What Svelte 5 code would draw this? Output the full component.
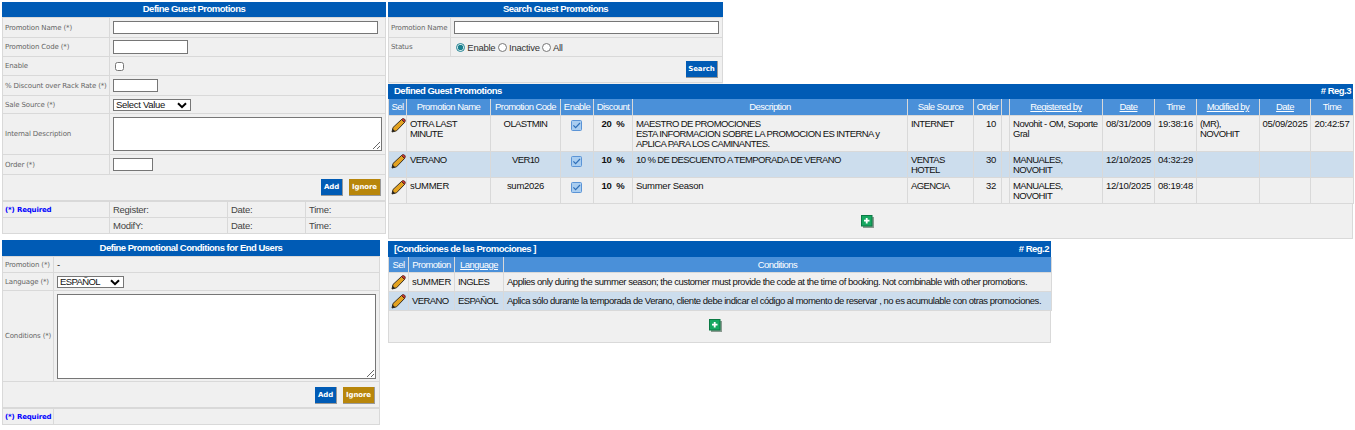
<script>
	const mainCols = [18, 84, 70, 33, 39, 275, 66, 28, 8, 93, 52, 42, 63, 51, 43];
	const mainHead = [
		{ t: "Sel" }, { t: "Promotion Name" }, { t: "Promotion Code" }, { t: "Enable" }, { t: "Discount" },
		{ t: "Description" }, { t: "Sale Source" }, { t: "Order" }, { t: "" },
		{ t: "Registered by", link: true }, { t: "Date", link: true }, { t: "Time" },
		{ t: "Modified by", link: true }, { t: "Date", link: true }, { t: "Time" },
	];
	const promos = [
		{
			name: "OTRA LAST MINUTE", code: "OLASTMIN", pct: "20", h: 36,
			desc: ["MAESTRO DE PROMOCIONES", "ESTA INFORMACION SOBRE LA PROMOCION ES INTERNA y APLICA PARA LOS CAMINANTES."],
			source: "INTERNET", order: 10, reg: "Novohit - OM, Soporte Gral", date: "08/31/2009", time: "19:38:16",
			mod: "(MR), NOVOHIT", modDate: "05/09/2025", modTime: "20:42:57",
		},
		{
			name: "VERANO", code: "VER10", pct: "10", h: 26, alt: true,
			desc: ["10 % DE DESCUENTO A TEMPORADA DE VERANO"],
			source: "VENTAS HOTEL", order: 30, reg: "MANUALES, NOVOHIT", date: "12/10/2025", time: "04:32:29",
			mod: "", modDate: "", modTime: "",
		},
		{
			name: "sUMMER", code: "sum2026", pct: "10", h: 26,
			desc: ["Summer Season"],
			source: "AGENCIA", order: 32, reg: "MANUALES, NOVOHIT", date: "12/10/2025", time: "08:19:48",
			mod: "", modDate: "", modTime: "",
		},
	];
	const condCols = [20, 46, 49, 548];
	const conds = [
		{ promo: "sUMMER", lang: "INGLES", text: "Applies only during the summer season; the customer must provide the code at the time of booking. Not combinable with other promotions." },
		{ promo: "VERANO", lang: "ESPAÑOL", alt: true, text: "Aplica sólo durante la temporada de Verano, cliente debe indicar el código al momento de reservar , no es acumulable con otras promociones." },
	];

	// upper case text runs wider in this font, it gets tighter spacing
	const isCaps = (s) => /^[^a-z]*[A-Z][^a-z]*$/.test(s) || s.startsWith("ESTA ");
</script>

{#snippet pencil()}
	<svg class="icon" width="15" height="15" viewBox="0 0 15 15">
		<path d="M1 14 L2 9.5 L10.5 1.5 L13.5 4.5 L5.5 12.8 Z" fill="#e3a21f" stroke="#3a3020" stroke-width="1"/>
		<path d="M10.5 1.5 L11.6 .6 Q12.5 .2 13.5 1 L14.2 2 Q14.6 3 13.9 3.9 L13.5 4.5 Z" fill="#c8372d" stroke="#3a2020" stroke-width=".7"/>
		<path d="M1 14 L1.7 10.8 L4.2 13.2 Z" fill="#222"/>
	</svg>
{/snippet}

{#snippet checked()}
	<svg class="icon check" width="11" height="11" viewBox="0 0 11 11">
		<rect x=".5" y=".5" width="10" height="10" rx="1" fill="#a9cdf0" stroke="#5b94d6"/>
		<path d="M2.4 5.4 L4.6 7.6 L9 3" fill="none" stroke="#2f6fb8" stroke-width="1.2"/>
	</svg>
{/snippet}

{#snippet plus()}
	<svg class="icon" width="13" height="13" viewBox="0 0 13 13">
		<rect x="2" y="2" width="11" height="11" fill="#8a9a90"/>
		<rect x=".5" y=".5" width="10.5" height="10.5" fill="#17a861" stroke="#0b7a45"/>
		<path d="M5.7 3 V8.5 M3 5.7 H8.5" stroke="#fff" stroke-width="1.8"/>
	</svg>
{/snippet}

{#snippet dropdown(label, cls)}
	<span class="select-wrap {cls}">
		<select><option>{label}</option></select>
		<svg class="chevron" width="10" height="7" viewBox="0 0 10 7">
			<path d="M1 1.2 L5 5.2 L9 1.2" fill="none" stroke="#000" stroke-width="2"/>
		</svg>
	</span>
{/snippet}

<div class="page">
	<div class="left">
		<section class="panel guest">
			<h2>Define Guest Promotions</h2>
			<table class="form">
				<colgroup><col class="lab-wide" /><col /></colgroup>
				<tbody>
					<tr class="r20"><th>Promotion Name (*)</th><td><input class="w265" type="text" /></td></tr>
					<tr class="r19"><th>Promotion Code (*)</th><td><input class="w75" type="text" /></td></tr>
					<tr class="r19"><th>Enable</th><td><input class="chk" type="checkbox" /></td></tr>
					<tr class="r20"><th>% Discount over Rack Rate (*)</th><td><input class="w45" type="text" /></td></tr>
					<tr class="r18"><th>Sale Source (*)</th><td>{@render dropdown("Select Value", "sel78")}</td></tr>
					<tr class="r41"><th>Internal Description</th><td><textarea class="ta-guest"></textarea></td></tr>
					<tr class="r20"><th>Order (*)</th><td><input class="w40" type="text" /></td></tr>
				</tbody>
			</table>
			<div class="actions">
				<button class="btn add">Add</button>
				<button class="btn ignore">Ignore</button>
			</div>
			<table class="audit">
				<colgroup><col class="lab-wide" /><col class="c118" /><col class="c78" /><col /></colgroup>
				<tbody>
					<tr><th class="req">(*) Required</th><td>Register:</td><td>Date:</td><td>Time:</td></tr>
					<tr><th></th><td>ModifY:</td><td>Date:</td><td>Time:</td></tr>
				</tbody>
			</table>
		</section>

		<section class="panel cond-form">
			<h2>Define Promotional Conditions for End Users</h2>
			<table class="form">
				<colgroup><col class="lab-narrow" /><col /></colgroup>
				<tbody>
					<tr class="r16"><th>Promotion (*)</th><td>-</td></tr>
					<tr class="r18"><th>Language (*)</th><td>{@render dropdown("ESPAÑOL", "sel66")}</td></tr>
					<tr class="r91"><th>Conditions (*)</th><td><textarea class="ta-cond"></textarea></td></tr>
				</tbody>
			</table>
			<div class="actions low">
				<button class="btn add">Add</button>
				<button class="btn ignore">Ignore</button>
			</div>
			<table class="audit">
				<colgroup><col class="lab-narrow" /><col /></colgroup>
				<tbody><tr><th class="req">(*) Required</th><td></td></tr></tbody>
			</table>
		</section>
	</div>

	<div class="right">
		<section class="panel search">
			<h2>Search Guest Promotions</h2>
			<table class="form">
				<colgroup><col class="lab-search" /><col /></colgroup>
				<tbody>
					<tr class="r20"><th>Promotion Name</th><td><input class="w265" type="text" /></td></tr>
					<tr class="r19"><th>Status</th><td class="radios">
						<label><input type="radio" name="status" checked /> Enable</label>
						<label><input type="radio" name="status" /> Inactive</label>
						<label><input type="radio" name="status" /> All</label>
					</td></tr>
				</tbody>
			</table>
			<div class="actions">
				<button class="btn add wide">Search</button>
			</div>
		</section>

		<section class="panel defined">
			<h2 class="split"><span>Defined Guest Promotions</span><span># Reg.3</span></h2>
			<table class="grid">
				<colgroup>
					{#each mainCols as w}<col style:width="{w}px" />{/each}
				</colgroup>
				<thead>
					<tr>
						{#each mainHead as col}
							<th class:link={col.link}>{col.t}</th>
						{/each}
					</tr>
				</thead>
				<tbody>
					{#each promos as p}
						<tr class:alt={p.alt} style:height="{p.h}px">
							<td class="ico">{@render pencil()}</td>
							<td class:caps={isCaps(p.name)}>{p.name}</td>
							<td class="ctr" class:caps={isCaps(p.code)}>{p.code}</td>
							<td class="ctr">{@render checked()}</td>
							<td class="ctr pct">{p.pct}&nbsp; %</td>
							<td>{#each p.desc as line}<div class:caps={isCaps(line)}>{line}</div>{/each}</td>
							<td class="caps">{p.source}</td>
							<td class="num">{p.order}</td>
							<td></td>
							<td class="tight" class:caps={isCaps(p.reg)}>{p.reg}</td>
							<td class="ctr nowrap">{p.date}</td>
							<td class="ctr nowrap">{p.time}</td>
							<td class="caps">{p.mod}</td>
							<td class="ctr nowrap">{p.modDate}</td>
							<td class="ctr nowrap">{p.modTime}</td>
						</tr>
					{/each}
				</tbody>
			</table>
			<div class="foot f35">{@render plus()}</div>
		</section>

		<section class="panel conditions">
			<h2 class="split"><span>[Condiciones de las Promociones ]</span><span># Reg.2</span></h2>
			<table class="grid">
				<colgroup>
					{#each condCols as w}<col style:width="{w}px" />{/each}
				</colgroup>
				<thead>
					<tr><th>Sel</th><th>Promotion</th><th class="link">Language</th><th>Conditions</th></tr>
				</thead>
				<tbody>
					{#each conds as c}
						<tr class:alt={c.alt} class="cond-row">
							<td class="ico">{@render pencil()}</td>
							<td class="mid" class:caps={isCaps(c.promo)}>{c.promo}</td>
							<td class="mid caps">{c.lang}</td>
							<td class="mid tight">{c.text}</td>
						</tr>
					{/each}
				</tbody>
			</table>
			<div class="foot f32">{@render plus()}</div>
		</section>
	</div>
</div>

<style>
	:global(body) {
		margin: 0;
		background: #fff;
		font-family: "Liberation Sans", Arial, sans-serif;
		font-size: 9.5px;
		letter-spacing: -0.27px;
		color: #111;
	}
	.page {
		display: flex;
		gap: 2px;
		padding: 2px 2px 0 2px;
	}
	.left {
		width: 384px;
		flex: none;
		display: flex;
		flex-direction: column;
		gap: 6px;
	}
	.right {
		flex: 1;
		min-width: 0;
		display: flex;
		flex-direction: column;
	}
	.panel {
		background: #f0f0f0;
		box-sizing: border-box;
	}
	.cond-form { width: 378px; }
	.search { width: 335px; height: 82px; }
	.conditions { width: 663px; margin-top: 2px; }
	h2 {
		margin: 0;
		height: 15px;
		line-height: 14px;
		background: #005bb5;
		color: #fff;
		font-size: 9.5px;
		font-weight: bold;
		text-align: center;
		letter-spacing: -0.5px;
	}
	.cond-form h2, .conditions h2 { height: 16px; line-height: 16px; }
	h2.split {
		display: flex;
		justify-content: space-between;
		padding: 0 2px 0 6px;
		text-align: left;
	}
	table {
		border-collapse: collapse;
		table-layout: fixed;
		width: 100%;
	}
	.lab-wide { width: 107px; }
	.lab-narrow { width: 51px; }
	.lab-search { width: 62px; }
	.c118 { width: 118px; }
	.c78 { width: 78px; }

	.form th, .form td, .audit th, .audit td {
		border: 1px solid #d9d9d9;
		padding: 0;
		box-sizing: border-box;
	}
	.form th, .audit th {
		font-family: "DejaVu Sans", Verdana, sans-serif;
		font-size: 7px;
		letter-spacing: -0.15px;
		font-weight: normal;
		color: #666;
		text-align: left;
		padding-left: 2px;
		white-space: nowrap;
	}
	.form td { padding-left: 3px; }
	.r16 { height: 16px; }
	.r18 { height: 18px; }
	.r19 { height: 19px; }
	.r20 { height: 20px; }
	.r41 { height: 41px; }
	.r91 { height: 91px; }
	input[type="text"], textarea, select {
		box-sizing: border-box;
		display: block;
		border: 1px solid #767676;
		background: #fff;
		margin: 0;
		padding: 0 1px;
		font-family: "Liberation Sans", Arial, sans-serif;
		font-size: 10px;
		color: #111;
		border-radius: 0;
	}
	input[type="text"] { height: 13px; }
	.w265 { width: 265px; }
	.w75 { width: 75px; height: 14px !important; }
	.w45 { width: 45px; }
	.w40 { width: 40px; }
	.chk { display: block; width: 9px; height: 9px; margin: 0 0 0 2px; }
	.select-wrap {
		display: block;
		position: relative;
		height: 12px;
	}
	.select-wrap select {
		appearance: none;
		width: 100%;
		height: 12px;
		padding: 0 0 0 2px;
		line-height: 10px;
		font-size: 9.5px;
		letter-spacing: -0.3px;
	}
	.sel66 select { letter-spacing: -0.6px; }
	.chevron {
		position: absolute;
		right: 4px;
		top: 3px;
		pointer-events: none;
	}
	.sel78 { width: 78px; }
	.sel66 { width: 67px; }
	.ta-guest { width: 269px; height: 34px; }
	.ta-cond { width: 319px; height: 85px; }

	.actions {
		display: flex;
		justify-content: flex-end;
		align-items: center;
		gap: 6px;
		height: 26px;
		border: 1px solid #d9d9d9;
		border-top: 0;
		box-sizing: border-box;
		padding-right: 4px;
	}
	.actions.low { padding-top: 2px; }
	.btn {
		height: 17px;
		border: 0;
		border-right: 1px solid #999;
		border-bottom: 1px solid #999;
		padding: 0;
		color: #fff;
		font-family: "DejaVu Sans", Verdana, sans-serif;
		font-size: 7px;
		font-weight: bold;
		letter-spacing: -0.1px;
	}
	.add { background: #005bb5; width: 22px; }
	.add.wide { width: 32px; }
	.ignore { background: #b8860b; width: 32px; }

	.audit tr { height: 16px; }
	.audit td { padding-left: 3px; color: #444; }
	.audit th.req { color: #00f; font-weight: bold; }

	.radios { color: #333; }
	.form td.radios { padding-left: 5px; }
	.radios label { white-space: nowrap; }
	.radios input { margin: 0; width: 9px; height: 9px; vertical-align: -1px; accent-color: #1a7f8e; }

	.grid th {
		background: #4a90d9;
		color: #fff;
		font-weight: normal;
		height: 16px;
		padding: 0;
		border: 1px solid #d9d9d9;
		border-top: 0;
		box-sizing: border-box;
		letter-spacing: -0.55px;
		white-space: nowrap;
		overflow: hidden;
	}
	.grid th.link { text-decoration: underline; }
	.grid td {
		border: 1px solid #d9d9d9;
		padding: 3px 3px 0 3px;
		vertical-align: top;
		line-height: 10px;
		overflow: hidden;
		box-sizing: border-box;
	}
	.grid .tight { letter-spacing: -0.47px; }
	.grid .caps { letter-spacing: -0.6px; }
	.grid tr.alt td { background: #ccdded; }
	.grid td.ctr { text-align: center; }
	.grid td.num { text-align: right; padding-right: 5px; }
	.grid td.pct { font-weight: bold; }
	.grid td.nowrap { white-space: nowrap; padding-left: 0; padding-right: 0; }
	.grid td.ico { padding: 2px 0 0 2px; }
	.grid td.mid { vertical-align: middle; padding-top: 0; white-space: nowrap; }
	.cond-row { height: 19px; }
	.icon { display: inline-block; vertical-align: top; }
	.check { margin: 1px 0 0 -2px; }

	.foot {
		display: flex;
		justify-content: center;
		align-items: center;
		border: 1px solid #d9d9d9;
		border-top: 0;
		box-sizing: border-box;
	}
	.f35 { height: 35px; padding: 2px 6px 0 0; }
	.f32 { height: 32px; padding: 0 8px 2px 0; }
</style>
